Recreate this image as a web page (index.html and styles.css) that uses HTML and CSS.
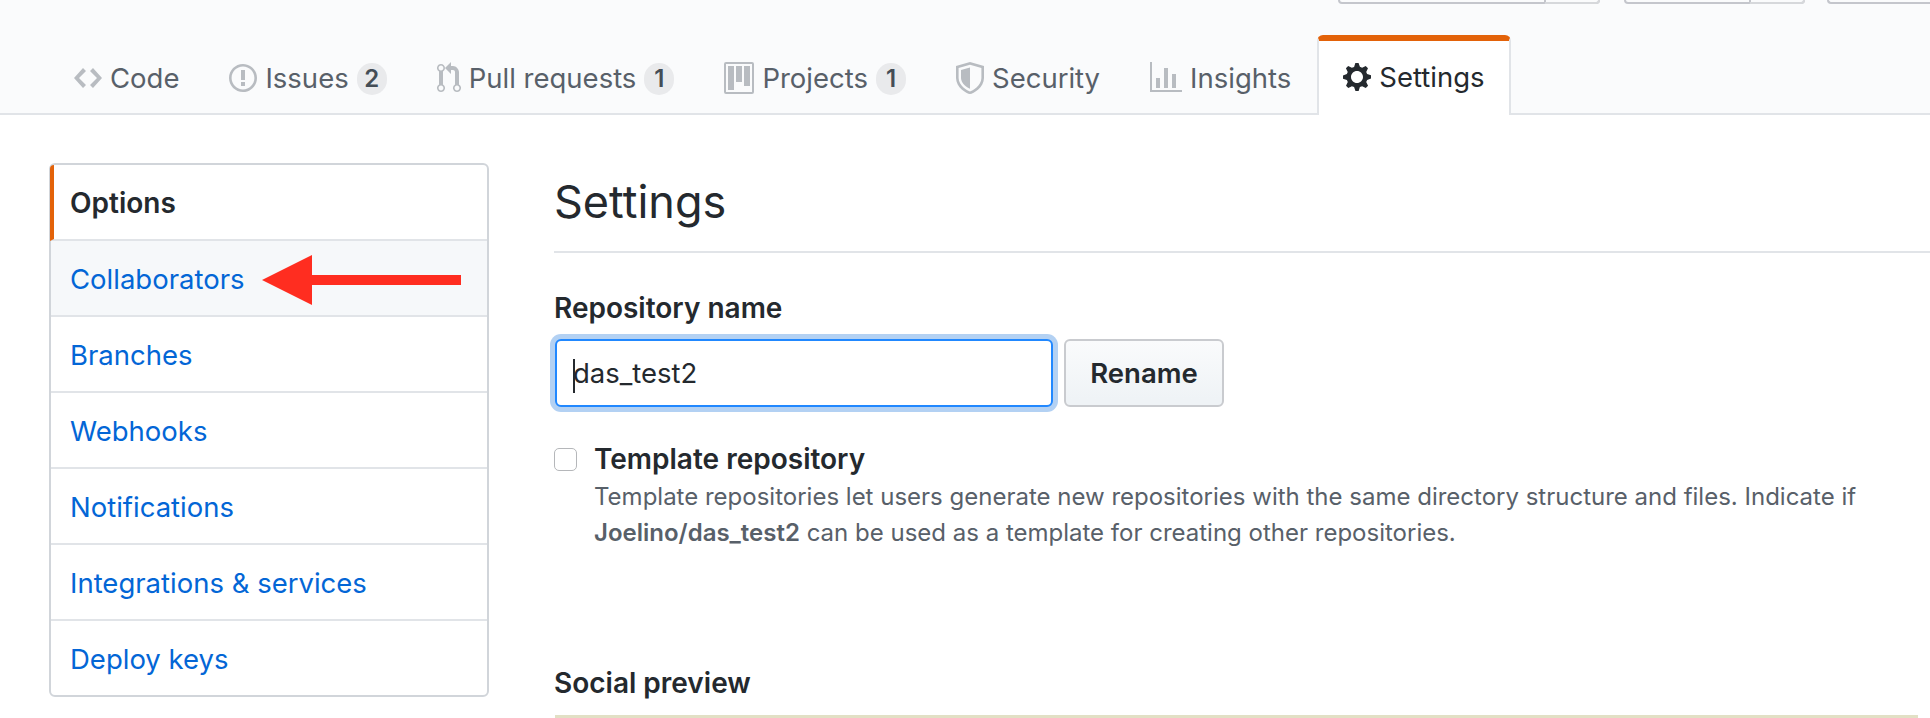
FILE: index.html
```html
<!DOCTYPE html>
<html lang="en">
<head>
    <meta charset="UTF-8">
    <title>Settings</title>
    <link rel="stylesheet" href="styles.css">
</head>
<body>

    <div class="pagehead">
        <div class="head-actions">
            <div class="head-btn btn-one"><span class="btn-count"></span></div>
            <div class="head-btn btn-two"><span class="btn-count"></span></div>
            <div class="head-btn btn-three"></div>
        </div>
        <nav class="reponav">
            <a class="tab">
                <svg class="octicon" width="28" height="32" viewBox="0 0 14 16"><path d="M9.5 3L8 4.5 11.5 8 8 11.5 9.5 13 14 8 9.5 3zm-5 0L0 8l4.5 5L6 11.5 2.5 8 6 4.5 4.5 3z"/></svg>
                <span>Code</span>
            </a>
            <a class="tab">
                <svg class="octicon" width="28" height="32" viewBox="0 0 14 16"><path d="M7 2.3c3.14 0 5.7 2.56 5.7 5.7s-2.56 5.7-5.7 5.7A5.71 5.71 0 0 1 1.3 8c0-3.14 2.56-5.7 5.7-5.7zM7 1C3.14 1 0 4.14 0 8s3.14 7 7 7 7-3.14 7-7-3.14-7-7-7zm1 3H6v5h2V4zm0 6H6v2h2v-2z"/></svg>
                <span>Issues</span>
                <span class="counter">2</span>
            </a>
            <a class="tab">
                <svg class="octicon" width="24" height="32" viewBox="0 0 12 16"><path d="M11 11.28V5c-.03-.78-.34-1.47-.94-2.06C9.46 2.35 8.78 2.03 8 2H7V0L4 3l3 3V4h1c.27.02.48.11.69.31.21.2.3.42.31.69v6.28A1.993 1.993 0 0 0 10 15a1.993 1.993 0 0 0 1-3.72zm-1 2.92c-.66 0-1.2-.55-1.2-1.2 0-.65.55-1.2 1.2-1.2.65 0 1.2.55 1.2 1.2 0 .65-.55 1.2-1.2 1.2zM4 3c0-1.11-.89-2-2-2a1.993 1.993 0 0 0-1 3.72v6.56A1.993 1.993 0 0 0 2 15a1.993 1.993 0 0 0 1-3.72V4.72c.59-.34 1-.98 1-1.72zm-.8 10c0 .66-.55 1.2-1.2 1.2-.65 0-1.2-.55-1.2-1.2 0-.65.55-1.2 1.2-1.2.65 0 1.2.55 1.2 1.2zM2 4.2C1.34 4.2.8 3.65.8 3c0-.65.55-1.2 1.2-1.2.65 0 1.2.55 1.2 1.2 0 .65-.55 1.2-1.2 1.2z"/></svg>
                <span>Pull requests</span>
                <span class="counter">1</span>
            </a>
            <a class="tab">
                <svg class="octicon" width="30" height="32" viewBox="0 0 15 16"><path d="M10 12h3V2h-3v10zm-4-2h3V2H6v8zm-4 4h3V2H2v12zm-1 1h13V1H1v14zM14 0H1a1 1 0 0 0-1 1v14a1 1 0 0 0 1 1h13a1 1 0 0 0 1-1V1a1 1 0 0 0-1-1z"/></svg>
                <span>Projects</span>
                <span class="counter">1</span>
            </a>
            <a class="tab">
                <svg class="octicon" width="28" height="32" viewBox="0 0 14 16"><path d="M7 0L0 2v6.020C0 12.690 5.310 16 7 16c1.690 0 7-3.310 7-7.980V2L7 0zm5.700 8.020c0 3.700-4.600 6.680-5.700 6.680S1.300 11.720 1.300 8.020V3L7 1.350 12.700 3z"/><path d="M7 2.700L2.500 4v4c0 2.900 3.300 5 4.500 5.400z"/></svg>
                <span>Security</span>
            </a>
            <a class="tab">
                <svg class="octicon" width="32" height="32" viewBox="0 0 16 16"><path d="M16 14v1H0V0h1v14h15zM5 13H3V8h2v5zm4 0H7V3h2v10zm4 0h-2V6h2v7z"/></svg>
                <span>Insights</span>
            </a>
            <a class="tab selected">
                <svg class="octicon" width="28" height="32" viewBox="0 0 14 16"><path d="M14 8.770v-1.600l-1.940-.640-.450-1.090.880-1.840-1.130-1.130-1.810.910-1.090-.450-.690-1.920h-1.600l-.630 1.940-1.110.450-1.840-.880-1.130 1.130.910 1.810-.450 1.090L0 7.230v1.590l1.940.640.450 1.090-.880 1.840 1.130 1.130 1.810-.910 1.090.450.690 1.920h1.590l.630-1.940 1.110-.450 1.840.880 1.130-1.130-.920-1.810.470-1.090L14 8.750v.020zM7 11c-1.660 0-3-1.340-3-3s1.340-3 3-3 3 1.340 3 3-1.340 3-3 3z"/></svg>
                <span>Settings</span>
            </a>
        </nav>
    </div>

    <div class="content">
        <div class="sidebar">
            <a class="menu-item selected">Options</a>
            <a class="menu-item hovered">Collaborators</a>
            <a class="menu-item">Branches</a>
            <a class="menu-item">Webhooks</a>
            <a class="menu-item">Notifications</a>
            <a class="menu-item">Integrations &amp; services</a>
            <a class="menu-item">Deploy keys</a>
            <svg class="arrow" width="200" height="50" viewBox="0 0 200 50"><path d="M0 25L50 0v20h149v10H50v20z"/></svg>
        </div>

        <div class="main">
            <h1 class="title">Settings</h1>

            <label class="field-label repo-label">Repository name</label>
            <div class="rename-row">
                <div class="name-input"><span class="caret"></span>das_test2</div>
                <button class="rename-btn">Rename</button>
            </div>

            <div class="check-row">
                <span class="checkbox"></span>
                <div>
                    <div class="field-label">Template repository</div>
                    <p class="note">Template repositories let users generate new repositories with the same directory structure and files. Indicate if <strong>Joelino/das_test2</strong> can be used as a template for creating other repositories.</p>
                </div>
            </div>

            <div class="field-label social">Social preview</div>
            <div class="preview-box"></div>
        </div>
    </div>

</body>
</html>
```

FILE: styles.css
```css
html, body {
    height: 718px;
    overflow: hidden;
}
body {
    font-family: Inter, "Liberation Sans", sans-serif;
    font-size: 27.5px;
    color: #24292e;
    margin: 0;
    padding: 0;
    background-color: #fff;
}
.pagehead {
    position: relative;
    height: 115px;
    box-sizing: border-box;
    background-color: #fafbfc;
    border-bottom: 2px solid #e1e4e8;
}
.head-actions {
    display: flex;
    height: 4px;
    padding-left: 1338px;
}
.head-btn {
    box-sizing: border-box;
    height: 4px;
    border: 2px solid #c4c6cc;
    border-top: none;
    border-radius: 0 0 6px 6px;
    display: flex;
    justify-content: flex-end;
}
.btn-one {
    width: 262px;
    margin-right: 24px;
}
.btn-two {
    width: 181px;
    margin-right: 22px;
}
.btn-three {
    width: 103px;
    border-right: none;
    border-radius: 0 0 0 6px;
}
.btn-count {
    box-sizing: border-box;
    width: 56px;
    height: 4px;
    margin-right: -2px;
    background-color: #fafbfc;
    border-left: 2px solid #c4c6cc;
    border-right: 2px solid #d6d8db;
    border-bottom: 2px solid #d6d8db;
    border-radius: 0 0 6px 0;
}
.reponav {
    display: flex;
    align-items: stretch;
    padding-left: 74px;
    margin-top: 31px;
    height: 80px;
}
.tab {
    display: flex;
    align-items: center;
    gap: 8px;
    box-sizing: border-box;
    padding-top: 5px;
    color: #586069;
    margin-right: 50px;
    white-space: nowrap;
}
.octicon {
    fill: #b8bcc1;
    fill-rule: evenodd;
    flex: none;
}
.counter {
    min-width: 30px;
    height: 32px;
    margin-top: 2px;
    line-height: 32px;
    text-align: center;
    font-size: 24px;
    font-weight: 600;
    color: #444d56;
    background-color: #e9eaec;
    border-radius: 16px;
}
.tab.selected {
    height: 80px;
    margin-left: -24px;
    margin-right: 0;
    padding: 0 24px 2px;
    color: #24292e;
    background-color: #fff;
    border-left: 2px solid #e1e4e8;
    border-right: 2px solid #e1e4e8;
    border-top: 6px solid #e36209;
    border-radius: 6px 6px 0 0;
}
.tab.selected .octicon {
    fill: #24292e;
}
.content {
    display: flex;
    padding: 48px 0 0 49px;
}
.sidebar {
    position: relative;
    box-sizing: border-box;
    width: 440px;
    height: 534px;
    flex: none;
    border: 2px solid #d1d5da;
    border-radius: 6px;
    margin-right: 65px;
}
.menu-item {
    display: flex;
    align-items: center;
    box-sizing: border-box;
    height: 76px;
    padding: 2px 0 0 19px;
    color: #0366d6;
    border-bottom: 2px solid #e1e4e8;
}
.menu-item:last-of-type {
    height: 74px;
    border-bottom: none;
}
.menu-item.selected {
    margin-left: -1px;
    font-size: 28px;
    font-weight: 600;
    color: #24292e;
    border-left: 4px solid #e36209;
    padding-left: 16px;
    border-top-left-radius: 4px;
}
.menu-item.hovered {
    background-color: #f6f8fa;
}
.arrow {
    position: absolute;
    left: 211px;
    top: 90px;
    fill: #ff2d20;
}
.main {
    flex: 1;
    min-width: 0;
}
.title {
    font-size: 45px;
    font-weight: 400;
    line-height: 64px;
    margin: 7px 0 0;
    padding-bottom: 17px;
    border-bottom: 2px solid #e1e4e8;
}
.field-label {
    display: block;
    font-size: 28px;
    font-weight: 600;
    line-height: 36px;
}
.repo-label {
    margin-top: 37px;
}
.rename-row {
    display: flex;
    gap: 11px;
    margin: 13px 0 0 1px;
}
.name-input {
    box-sizing: border-box;
    width: 498px;
    height: 68px;
    line-height: 64px;
    padding-left: 16px;
    background-color: #fff;
    border: 2px solid #2188ff;
    border-radius: 6px;
    box-shadow: 0 0 0 5px rgba(3, 102, 214, 0.3);
}
.caret {
    display: inline-block;
    width: 2px;
    height: 34px;
    margin-right: -2px;
    vertical-align: middle;
    background-color: #24292e;
}
.rename-btn {
    box-sizing: border-box;
    width: 160px;
    height: 68px;
    font-family: inherit;
    font-size: 27.5px;
    font-weight: 600;
    color: #24292e;
    background-image: linear-gradient(#fafbfc, #eff3f6 90%);
    border: 2px solid #c9cbcf;
    border-radius: 6px;
}
.check-row {
    display: flex;
    gap: 17px;
    margin-top: 34px;
}
.checkbox {
    box-sizing: border-box;
    flex: none;
    width: 23px;
    height: 23px;
    margin-top: 7px;
    border: 1px solid #b5b7ba;
    border-radius: 5px;
    background-color: #fff;
}
.note {
    font-size: 24px;
    line-height: 36px;
    color: #586069;
    margin: 2px 0 0;
    width: 1280px;
}
.note strong {
    font-weight: 600;
}
.field-label.social {
    margin-top: 114px;
}
.preview-box {
    height: 4px;
    margin: 14px 12px 0 1px;
    background-color: #e2e0c5;
}
```
